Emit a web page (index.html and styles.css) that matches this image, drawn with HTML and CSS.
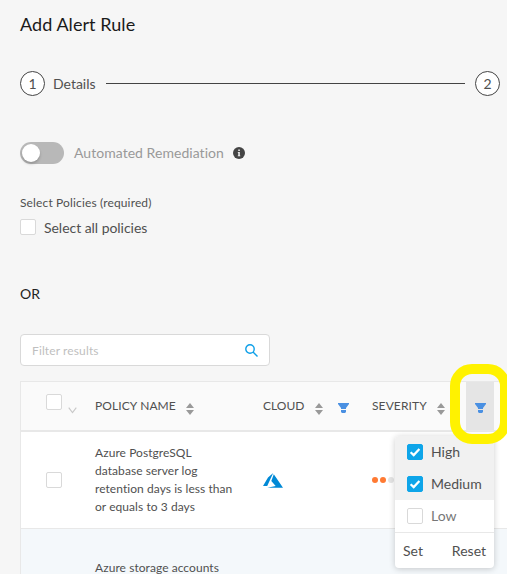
FILE: index.html
```html
<!DOCTYPE html>
<html lang="en">
<head>
<meta charset="utf-8">
<title>Add Alert Rule</title>
<link rel="stylesheet" href="styles.css">
</head>
<body>
<svg class="defs" aria-hidden="true">
  <symbol id="sort" viewBox="0 0 8 12"><path d="M0 5 4 0l4 5zM0 7h8l-4 5z" fill="#999"/></symbol>
  <symbol id="funnel" viewBox="0 0 11 10"><path d="M0 0h11v1L8 5v1H3V5L0 1zM3 7h5v2l-1 1H4L3 9z" fill="#4a90e2"/></symbol>
  <symbol id="tick" viewBox="0 0 16 16"><path d="M3.6 8.2 6.7 11.1 12.4 5" fill="none" stroke="#fff" stroke-width="2.2"/></symbol>
</svg>
<main class="page">
  <h1 class="title">Add Alert Rule</h1>

  <div class="steps">
    <span class="step-number">1</span>
    <span class="step-name">Details</span>
    <span class="step-line"></span>
    <span class="step-number">2</span>
  </div>

  <div class="remediation">
    <span class="toggle"><span class="knob"></span></span>
    <span class="remediation-label">Automated Remediation</span>
    <svg class="info" viewBox="0 0 12 12"><circle cx="6" cy="6" r="6" fill="#444"/><path d="M5.3 2.5h1.5v1.4H5.3zM4.8 4.9h2v3.6h.5v.8H4.8v-.8h.5V5.7h-.5z" fill="#f5f5f5"/></svg>
  </div>

  <div class="field-label">Select Policies (required)</div>
  <div class="select-all"><span class="checkbox"></span><span class="select-all-text">Select all policies</span></div>
  <div class="or">OR</div>

  <div class="search">
    <span class="placeholder">Filter results</span>
    <svg class="search-icon" viewBox="0 0 13 13" fill="none" stroke="#0d9fe8" stroke-width="1.4"><circle cx="5" cy="5" r="4.2"/><path d="m8 8 4.5 4.5"/></svg>
  </div>

  <div class="table">
    <div class="row head">
      <div class="check-cell"><span class="checkbox"></span><svg class="chevron" viewBox="0 0 9 7"><path d="m.7.7 3.8 5 3.8-5" fill="none" stroke="#c8c8c8" stroke-width="1.1"/></svg></div>
      <div class="head-cell"><span class="name-head">POLICY NAME</span><svg class="sort"><use href="#sort"/></svg></div>
      <div class="head-cell"><span class="cloud-head">CLOUD</span><svg class="sort"><use href="#sort"/></svg><svg class="funnel"><use href="#funnel"/></svg></div>
      <div class="head-cell"><span class="severity-head">SEVERITY</span><svg class="sort"><use href="#sort"/></svg></div>
      <div class="filter-cell">
        <svg class="funnel"><use href="#funnel"/></svg>
        <div class="menu">
          <div class="option selected"><span class="checkbox checked"><svg><use href="#tick"/></svg></span><span class="option-text">High</span></div>
          <div class="option selected"><span class="checkbox checked"><svg><use href="#tick"/></svg></span><span class="option-text">Medium</span></div>
          <div class="option"><span class="checkbox"></span><span class="option-text">Low</span></div>
          <div class="actions"><span>Set</span><span>Reset</span></div>
        </div>
        <span class="highlight"></span>
      </div>
    </div>
    <div class="row body">
      <div class="check-cell"><span class="checkbox"></span></div>
      <div class="name">Azure PostgreSQL<br>database server log<br>retention days is less than<br>or equals to 3 days</div>
      <div><svg class="azure" viewBox="0 0 20 15"><path d="M10.2 0 5 4.4 0 13h4.2zM10.8 1.2 8.3 8l4.4 5.1L4.3 14.8H20z" fill="#0089d6"/></svg></div>
      <div class="dots"><i></i><i></i><i class="off"></i></div>
      <div></div>
    </div>
    <div class="row body alternate">
      <div class="check-cell"></div>
      <div class="name">Azure storage accounts</div>
    </div>
  </div>
</main>
</body>
</html>
```

FILE: styles.css
```css
* { box-sizing: border-box; }
html, body { height: 100%; }
body {
  margin: 0;
  overflow: hidden;
  background: #f6f6f6;
  color: #505050;
  font-family: Lato, "Liberation Sans", sans-serif;
  font-size: 14px;
}
svg { display: block; flex: none; }
.defs { position: absolute; width: 0; height: 0; }
.page {
  height: 574px;
  padding: 11px 0 0 20px;
  overflow: hidden;
  display: flex;
  flex-direction: column;
}
.page > * { flex: none; }
.title { margin: 0; font-size: 18px; line-height: 26px; font-weight: 400; letter-spacing: .06px; color: #1a1a1a; }

.steps { display: flex; align-items: center; margin: 34px 7px 0 0; height: 25px; }
.step-number {
  width: 25px;
  height: 25px;
  border: 1px solid #444;
  border-radius: 50%;
  background: #fff;
  line-height: 24px;
  text-align: center;
}
.step-name { width: 43px; margin-left: 8px; line-height: 24px; white-space: nowrap; }
.step-line { flex: 1; height: 1px; margin: 0 10px; background: #444; }

.remediation { display: flex; align-items: center; height: 22px; margin-top: 46px; color: #999; }
.toggle { width: 44px; height: 22px; padding: 2px; border-radius: 11px; background: #b8b8b8; }
.knob { display: block; width: 18px; height: 18px; border-radius: 50%; background: #fff; box-shadow: 0 2px 3px rgba(0, 0, 0, .2); }
.remediation-label { width: 150px; margin-left: 10px; padding-bottom: 2px; letter-spacing: .04px; white-space: nowrap; }
.info { width: 12px; height: 12px; margin-left: 9px; }

.field-label { margin-top: 30px; font-size: 12px; line-height: 18px; letter-spacing: .14px; }
.select-all { display: flex; align-items: center; height: 18px; margin-top: 6px; }
.checkbox { display: block; flex: none; width: 16px; height: 16px; border: 1px solid #d9d9d9; border-radius: 2px; background: #fff; }
.select-all-text { margin-left: 8px; letter-spacing: -.04px; }
.or { margin-top: 48px; line-height: 20px; color: #222; }

.search {
  display: flex;
  align-items: center;
  justify-content: space-between;
  width: 250px;
  height: 32px;
  margin-top: 30px;
  padding: 0 11px;
  border: 1px solid #d9d9d9;
  border-radius: 4px;
  background: #fff;
  font-size: 12px;
}
.placeholder { color: #bfbfbf; letter-spacing: .12px; }
.search-icon { width: 13px; height: 13px; }

.table { margin-top: 15px; border: solid #e8e8e8; border-width: 1px 0 0 1px; background: #fff; }
.row { display: grid; grid-template-columns: 74px 168px 109px 94px 28px 13px; align-items: center; }
.head { height: 50px; border-bottom: 2px solid #e8e8e8; background: #fafafa; font-size: 12px; }
.check-cell { display: flex; padding-left: 25px; }
.head .check-cell { align-items: flex-start; height: 24px; }
.chevron { width: 9px; height: 7px; margin: 13px 0 0 6px; }
.head-cell { display: flex; align-items: center; white-space: nowrap; }
.head-cell > span { padding-bottom: 1px; }
.name-head { width: 81px; letter-spacing: .1px; }
.cloud-head { width: 42px; }
.severity-head { width: 55px; letter-spacing: .1px; }
.sort { width: 8px; height: 12px; margin: 6px 0 0 10px; }
.funnel { width: 11px; height: 10px; margin: 4px 0 0 15px; }
.filter-cell { position: relative; align-self: stretch; display: flex; align-items: center; justify-content: center; background: #e5e5e5; }
.filter-cell > .funnel { margin-left: 0; }
.highlight {
  position: absolute;
  z-index: 3;
  top: -18px;
  left: -16px;
  width: 60px;
  height: 80px;
  border: 10px solid #fff200;
  border-radius: 22px;
}
.menu {
  position: absolute;
  z-index: 2;
  top: 54px;
  right: 0;
  width: 99px;
  height: 132px;
  border-radius: 4px;
  overflow: hidden;
  background: #fff;
  box-shadow: 0 1px 6px rgba(0, 0, 0, .2);
  font-size: 14px;
}
.option { display: flex; align-items: center; gap: 8px; height: 32px; padding-left: 12px; color: #777; }
.option-text { padding-bottom: 1px; }
.selected { background: #f1f1f1; color: #505050; }
.checked { border-color: #0ea5e9; background: #0ea5e9; }
.checked svg { width: 16px; height: 16px; margin: -1px; }
.actions { display: flex; justify-content: space-between; height: 36px; padding: 0 8px; border-top: 1px solid #e8e8e8; line-height: 35px; }

.body { height: 97px; border-bottom: 1px solid #e8e8e8; font-size: 12px; line-height: 18px; }
.name { white-space: nowrap; letter-spacing: .06px; }
.azure { width: 20px; height: 15px; }
.dots { display: flex; gap: 2px; }
.dots i { width: 6px; height: 6px; border-radius: 50%; background: #ff7a33; }
.dots .off { background: #e5e5e5; }
.alternate { align-items: start; padding-top: 30px; background: #f4f8fb; }
```
